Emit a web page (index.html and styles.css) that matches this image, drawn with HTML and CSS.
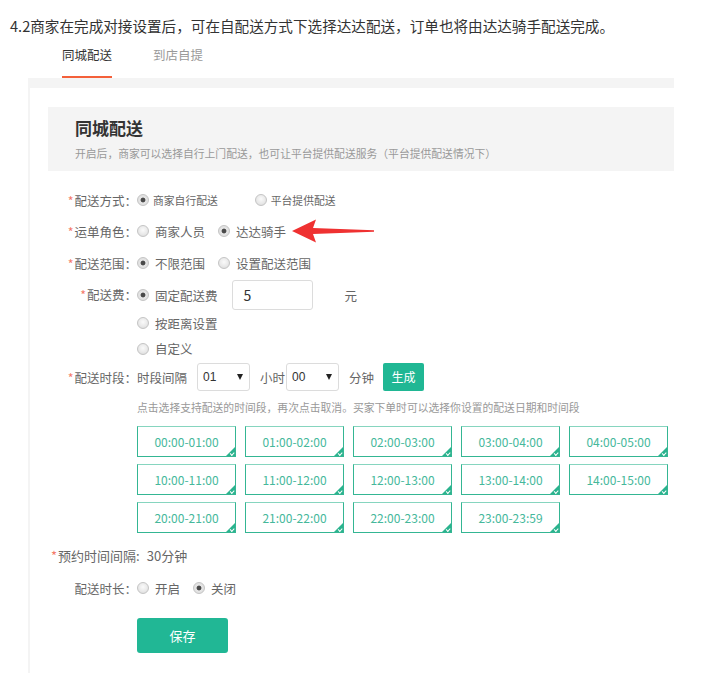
FILE: index.html
```html
<!DOCTYPE html>
<html lang="zh-CN">
<head>
<meta charset="utf-8">
<title>同城配送</title>
<link rel="stylesheet" href="styles.css">
</head>
<body>
<div class="page">
  <p class="intro">4.2商家在完成对接设置后，可在自配送方式下选择达达配送，订单也将由达达骑手配送完成。</p>
  <div class="tabs">
    <span class="tab active">同城配送</span>
    <span class="tab">到店自提</span>
  </div>
  <div class="panel">
    <div class="panel-body">
      <div class="head">
        <h2 class="head-title">同城配送</h2>
        <p class="head-sub">开启后，商家可以选择自行上门配送，也可让平台提供配送服务（平台提供配送情况下）</p>
      </div>
      <div class="form">
        <div class="row r1">
          <span class="lbl"><i class="req">*</i>配送方式：</span>
          <div class="opts small wide">
            <span class="opt"><span class="radio checked"></span>商家自行配送</span>
            <span class="opt"><span class="radio"></span>平台提供配送</span>
          </div>
        </div>
        <div class="row r2">
          <span class="lbl"><i class="req">*</i>运单角色：</span>
          <div class="opts">
            <span class="opt"><span class="radio"></span>商家人员</span>
            <span class="opt"><span class="radio checked"></span>达达骑手</span>
          </div>
          <svg class="arrow" width="84" height="26" viewBox="0 0 84 26"><polygon points="0,13 24,1.5 21,10 82,12.2 82,13.8 21,16 24,24.5" fill="#ef3131"/></svg>
        </div>
        <div class="row r3">
          <span class="lbl"><i class="req">*</i>配送范围：</span>
          <div class="opts">
            <span class="opt"><span class="radio checked"></span>不限范围</span>
            <span class="opt"><span class="radio"></span>设置配送范围</span>
          </div>
        </div>
        <div class="row fee">
          <span class="lbl fee-lbl"><i class="req">*</i>配送费：</span>
          <div class="fee-opts">
            <div class="fee-line first">
              <span class="opt"><span class="radio checked"></span>固定配送费</span>
              <span class="input">5</span>
              <span class="unit">元</span>
            </div>
            <div class="fee-line second"><span class="opt"><span class="radio"></span>按距离设置</span></div>
            <div class="fee-line third"><span class="opt"><span class="radio"></span>自定义</span></div>
          </div>
        </div>
        <div class="row period">
          <span class="lbl"><i class="req">*</i>配送时段：</span>
          <span class="ptext">时段间隔</span>
          <span class="select">01</span>
          <span class="ptext hour">小时</span>
          <span class="select">00</span>
          <span class="ptext min">分钟</span>
          <span class="gen">生成</span>
        </div>
        <p class="hint">点击选择支持配送的时间段，再次点击取消。买家下单时可以选择你设置的配送日期和时间段</p>
        <div class="slots">
          <span class="slot">00:00-01:00</span>
          <span class="slot">01:00-02:00</span>
          <span class="slot">02:00-03:00</span>
          <span class="slot">03:00-04:00</span>
          <span class="slot">04:00-05:00</span>
          <span class="slot">10:00-11:00</span>
          <span class="slot">11:00-12:00</span>
          <span class="slot">12:00-13:00</span>
          <span class="slot">13:00-14:00</span>
          <span class="slot">14:00-15:00</span>
          <span class="slot">20:00-21:00</span>
          <span class="slot">21:00-22:00</span>
          <span class="slot">22:00-23:00</span>
          <span class="slot">23:00-23:59</span>
        </div>
        <div class="interval"><i class="req">*</i>预约时间间隔:<span class="interval-val">30分钟</span></div>
        <div class="row dur">
          <span class="lbl">配送时长：</span>
          <div class="opts">
            <span class="opt"><span class="radio"></span>开启</span>
            <span class="opt"><span class="radio checked"></span>关闭</span>
          </div>
        </div>
        <div class="save-row"><span class="save">保存</span></div>
      </div>
    </div>
  </div>
</div>
</body>
</html>
```

FILE: styles.css
```css
html, body {
  margin: 0;
  padding: 0;
  background: #fff;
}
body {
  font-family: "Noto Sans CJK SC", "Noto Sans", sans-serif;
  color: #666;
  overflow: hidden;
}
.page {
  width: 703px;
  height: 673px;
  padding-top: 16px;
  box-sizing: border-box;
}
.intro {
  margin: 0;
  padding-left: 10px;
  font-size: 14.6px;
  line-height: 20px;
  color: #333;
  white-space: nowrap;
}
.tabs {
  display: flex;
  gap: 41px;
  margin: 9px 0 0 62px;
}
.tab {
  font-size: 12.5px;
  line-height: 20px;
  padding-bottom: 11px;
  border-bottom: 2px solid transparent;
  color: #999;
}
.tab.active {
  color: #333;
  border-bottom-color: #f4603a;
}
.panel {
  margin-left: 28px;
  width: 646px;
  background: #f4f4f4;
  padding: 10px 0 0 2px;
  box-sizing: border-box;
}
.panel-body {
  background: #fff;
  padding: 19px 0 0 18px;
  height: 585px;
  box-sizing: border-box;
}
.head {
  background: #f4f4f4;
  height: 64px;
  padding: 9px 0 0 27px;
  box-sizing: border-box;
}
.head-title {
  margin: 0;
  font-size: 17px;
  line-height: 24px;
  font-weight: bold;
  color: #333;
}
.head-sub {
  margin: 5px 0 0;
  font-size: 10.8px;
  line-height: 16px;
  color: #999;
  white-space: nowrap;
}
.form {
  padding-top: 14px;
}
.row {
  display: flex;
  align-items: center;
  font-size: 12.5px;
}
.r1 { height: 30px; }
.r2 { height: 32px; }
.r3 { height: 32px; }
.period { height: 30px; }
.dur { height: 20px; margin-top: 12px; }
.lbl {
  width: 89px;
  flex: none;
  text-align: right;
  white-space: nowrap;
  color: #666;
}
.req {
  font-style: normal;
  color: #f47a6a;
  margin-right: 1px;
}
.opts {
  display: flex;
  align-items: center;
  gap: 13px;
}
.opts.wide { gap: 37px; }
.opt {
  display: flex;
  align-items: center;
  gap: 6px;
  white-space: nowrap;
  color: #666;
}
.opts.small .opt {
  font-size: 10.8px;
  gap: 4px;
}
.radio {
  width: 12px;
  height: 12px;
  border-radius: 50%;
  box-sizing: border-box;
  border: 1px solid #c4c4c4;
  background: radial-gradient(circle at 50% 40%, #fafafa 0, #e9e9e9 55%, #d6d6d6 100%);
  flex: none;
}
.radio.checked {
  background: radial-gradient(circle at 50% 50%, #4a4a4a 0, #4a4a4a 2px, #e6e6e6 2.8px, #dadada 100%);
}
.arrow {
  margin-left: 6px;
  flex: none;
}
.fee {
  align-items: flex-start;
}
.fee-lbl {
  line-height: 32px;
}
.fee-opts {
  display: flex;
  flex-direction: column;
}
.fee-line {
  display: flex;
  align-items: center;
}
.fee-line.first { height: 32px; }
.fee-line.second { height: 24px; }
.fee-line.third { height: 27px; }
.input {
  margin-left: 14px;
  width: 81px;
  height: 30px;
  box-sizing: border-box;
  border: 1px solid #dcdcdc;
  border-radius: 3px;
  padding-left: 11px;
  font-size: 14px;
  line-height: 28px;
  color: #333;
}
.unit {
  margin-left: 32px;
  color: #666;
}
.ptext {
  white-space: nowrap;
  color: #666;
}
.select {
  display: flex;
  align-items: center;
  justify-content: space-between;
  width: 53px;
  height: 28px;
  box-sizing: border-box;
  border: 1px solid #dcdcdc;
  border-radius: 3px;
  padding: 0 6px 0 5px;
  font-family: "Liberation Sans", Arial, sans-serif;
  font-size: 12px;
  color: #333;
  margin-left: 10px;
}
.select::after {
  content: "";
  border-left: 3.5px solid transparent;
  border-right: 3.5px solid transparent;
  border-top: 6px solid #222;
}
.hour { margin-left: 10px; }
.hour + .select { margin-left: 1px; }
.min { margin-left: 10px; }
.gen {
  margin-left: 9px;
  width: 41px;
  height: 28px;
  line-height: 28px;
  text-align: center;
  background: #20b794;
  color: #fff;
  border-radius: 2px;
  font-size: 12px;
}
.hint {
  margin: 7px 0 0 89px;
  font-size: 10.8px;
  line-height: 16px;
  color: #999;
  white-space: nowrap;
}
.slots {
  margin: 11px 0 0 89px;
  display: grid;
  grid-template-columns: repeat(5, 99px);
  grid-auto-rows: 31px;
  column-gap: 9px;
  row-gap: 7px;
}
.slot {
  position: relative;
  box-sizing: border-box;
  border: 1px solid #34b693;
  border-top-color: #86d5bf;
  display: flex;
  align-items: center;
  justify-content: center;
  font-size: 12px;
  color: #45b89b;
}
.slot::after {
  content: "";
  position: absolute;
  right: 0;
  bottom: 0;
  width: 0;
  height: 0;
  border-style: solid;
  border-width: 0 0 9px 9px;
  border-color: transparent transparent #2bb38e transparent;
}
.slot::before {
  content: "";
  position: absolute;
  right: 1px;
  bottom: 2px;
  width: 3px;
  height: 1.5px;
  border-left: 1px solid #fff;
  border-bottom: 1px solid #fff;
  transform: rotate(-45deg);
  z-index: 1;
}
.interval {
  margin: 13px 0 0 3px;
  font-size: 13px;
  line-height: 20px;
  color: #666;
  white-space: nowrap;
}
.interval-val {
  margin-left: 7px;
}
.save-row {
  margin: 20px 0 0 89px;
}
.save {
  display: block;
  width: 91px;
  height: 35px;
  line-height: 35px;
  text-align: center;
  background: #21b795;
  color: #fff;
  border-radius: 3px;
  font-size: 13px;
}
```
